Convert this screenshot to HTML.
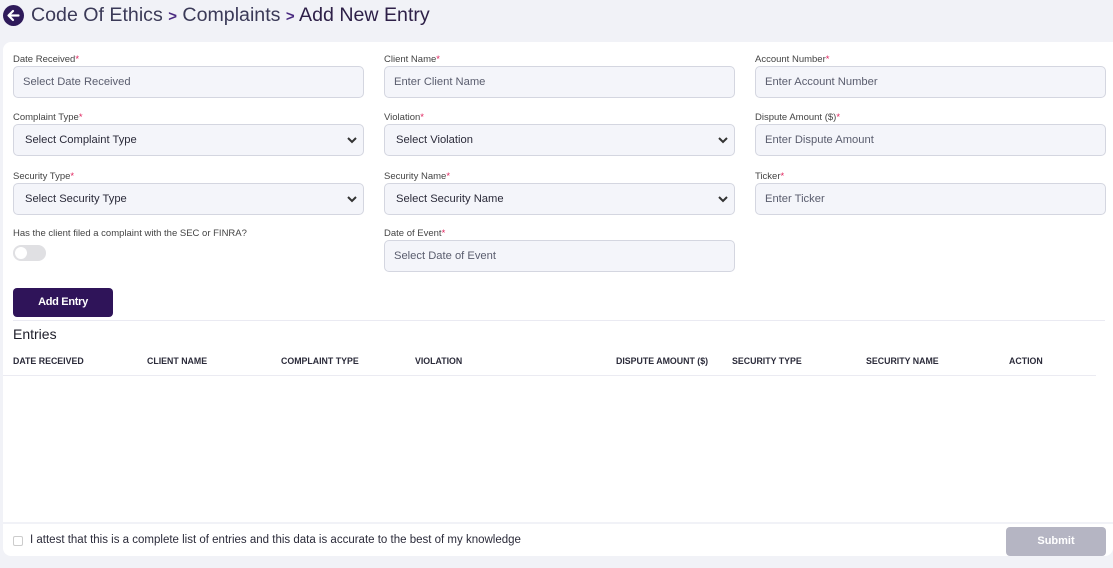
<!DOCTYPE html><html><head><style>
*{box-sizing:border-box;margin:0;padding:0}
body{width:1113px;height:568px;background:#f1f2f7;font-family:"Liberation Sans",sans-serif;position:relative;overflow:hidden;color:#2b2b3a}
.a{position:absolute}
.card{left:3px;top:42px;width:1110px;height:514px;background:#fff;border-radius:8px 0 8px 8px}
.lbl{font-size:9.5px;color:#444}
.lbl b{color:#e0245e;font-weight:normal}
.in{width:351px;height:32px;border:1px solid #d4d6e0;border-radius:5px;background:#f4f5fa;font-size:11.2px;color:#5a5d6e;padding:0 9px;line-height:30px}
.sel{color:#2b2b3a;padding-left:11px}
.sel svg{position:absolute;right:5px;top:11px}
.th{font-size:8.8px;font-weight:bold;color:#2b2b3a;top:356px}
</style></head><body>
<svg class="a" style="left:3px;top:5px" width="21" height="21" viewBox="0 0 21 21"><circle cx="10.5" cy="10.5" r="10.5" fill="#2e1a5a"/><path d="M15.5 10.5H6M10 6l-4.5 4.5L10 15" stroke="#fff" stroke-width="2.2" fill="none" stroke-linecap="round" stroke-linejoin="round"/></svg>
<div class="a" style="left:31px;top:4px;font-size:19.6px;color:#3b3a58;white-space:nowrap">Code Of Ethics <span style="color:#4a2a80;font-weight:bold;font-size:15px">&gt;</span> Complaints <span style="color:#4a2a80;font-weight:bold;font-size:15px">&gt;</span> <span style="color:#2e2048">Add New Entry</span></div>
<div class="a card"></div>

<div class="a lbl" style="left:13px;top:54px">Date Received<b>*</b></div>
<div class="a in" style="left:13px;top:66px">Select Date Received</div>
<div class="a lbl" style="left:384px;top:54px">Client Name<b>*</b></div>
<div class="a in" style="left:384px;top:66px">Enter Client Name</div>
<div class="a lbl" style="left:755px;top:54px">Account Number<b>*</b></div>
<div class="a in" style="left:755px;top:66px">Enter Account Number</div>

<div class="a lbl" style="left:13px;top:112px">Complaint Type<b>*</b></div>
<div class="a in sel" style="left:13px;top:124px">Select Complaint Type<svg width="12" height="9" viewBox="0 0 12 9"><path d="M2 2l4 4 4-4" stroke="#333" stroke-width="2" fill="none"/></svg></div>
<div class="a lbl" style="left:384px;top:112px">Violation<b>*</b></div>
<div class="a in sel" style="left:384px;top:124px">Select Violation<svg width="12" height="9" viewBox="0 0 12 9"><path d="M2 2l4 4 4-4" stroke="#333" stroke-width="2" fill="none"/></svg></div>
<div class="a lbl" style="left:755px;top:112px">Dispute Amount ($)<b>*</b></div>
<div class="a in" style="left:755px;top:124px">Enter Dispute Amount</div>

<div class="a lbl" style="left:13px;top:171px">Security Type<b>*</b></div>
<div class="a in sel" style="left:13px;top:183px">Select Security Type<svg width="12" height="9" viewBox="0 0 12 9"><path d="M2 2l4 4 4-4" stroke="#333" stroke-width="2" fill="none"/></svg></div>
<div class="a lbl" style="left:384px;top:171px">Security Name<b>*</b></div>
<div class="a in sel" style="left:384px;top:183px">Select Security Name<svg width="12" height="9" viewBox="0 0 12 9"><path d="M2 2l4 4 4-4" stroke="#333" stroke-width="2" fill="none"/></svg></div>
<div class="a lbl" style="left:755px;top:171px">Ticker<b>*</b></div>
<div class="a in" style="left:755px;top:183px">Enter Ticker</div>

<div class="a lbl" style="left:13px;top:228px">Has the client filed a complaint with the SEC or FINRA?</div>
<div class="a" style="left:13px;top:245px;width:33px;height:16px;border-radius:8px;background:#e0e0e3"><div class="a" style="left:2px;top:2px;width:12px;height:12px;border-radius:6px;background:#fff"></div></div>
<div class="a lbl" style="left:384px;top:228px">Date of Event<b>*</b></div>
<div class="a in" style="left:384px;top:240px">Select Date of Event</div>

<div class="a" style="left:13px;top:288px;width:100px;height:29px;border-radius:4px;background:#2f1459;color:#fff;font-size:11px;font-weight:bold;text-align:center;line-height:29px;letter-spacing:-0.3px">Add Entry</div>
<div class="a" style="left:13px;top:320px;width:1092px;height:1px;background:#eaeaf2"></div>
<div class="a" style="left:13px;top:326px;font-size:14px;color:#1e1e2a">Entries</div>
<div class="a th" style="left:13px">DATE RECEIVED</div>
<div class="a th" style="left:147px">CLIENT NAME</div>
<div class="a th" style="left:281px">COMPLAINT TYPE</div>
<div class="a th" style="left:415px">VIOLATION</div>
<div class="a th" style="left:616px">DISPUTE AMOUNT ($)</div>
<div class="a th" style="left:732px">SECURITY TYPE</div>
<div class="a th" style="left:866px">SECURITY NAME</div>
<div class="a th" style="left:1009px">ACTION</div>
<div class="a" style="left:3px;top:375px;width:1093px;height:1px;background:#ebebf2"></div>

<div class="a" style="left:3px;top:522px;width:1110px;height:2px;background:#f1f2f7"></div>
<div class="a" style="left:13px;top:536px;width:10px;height:10px;border:1px solid #ccc;border-radius:2px"></div>
<div class="a" style="left:30px;top:534px;font-size:11.5px;color:#2b2b3a">I attest that this is a complete list of entries and this data is accurate to the best of my knowledge</div>
<div class="a" style="left:1006px;top:527px;width:100px;height:29px;border-radius:4px;background:#b5b5c3;color:#fff;font-size:11px;font-weight:bold;text-align:center;line-height:29px">Submit</div>
</body></html>
